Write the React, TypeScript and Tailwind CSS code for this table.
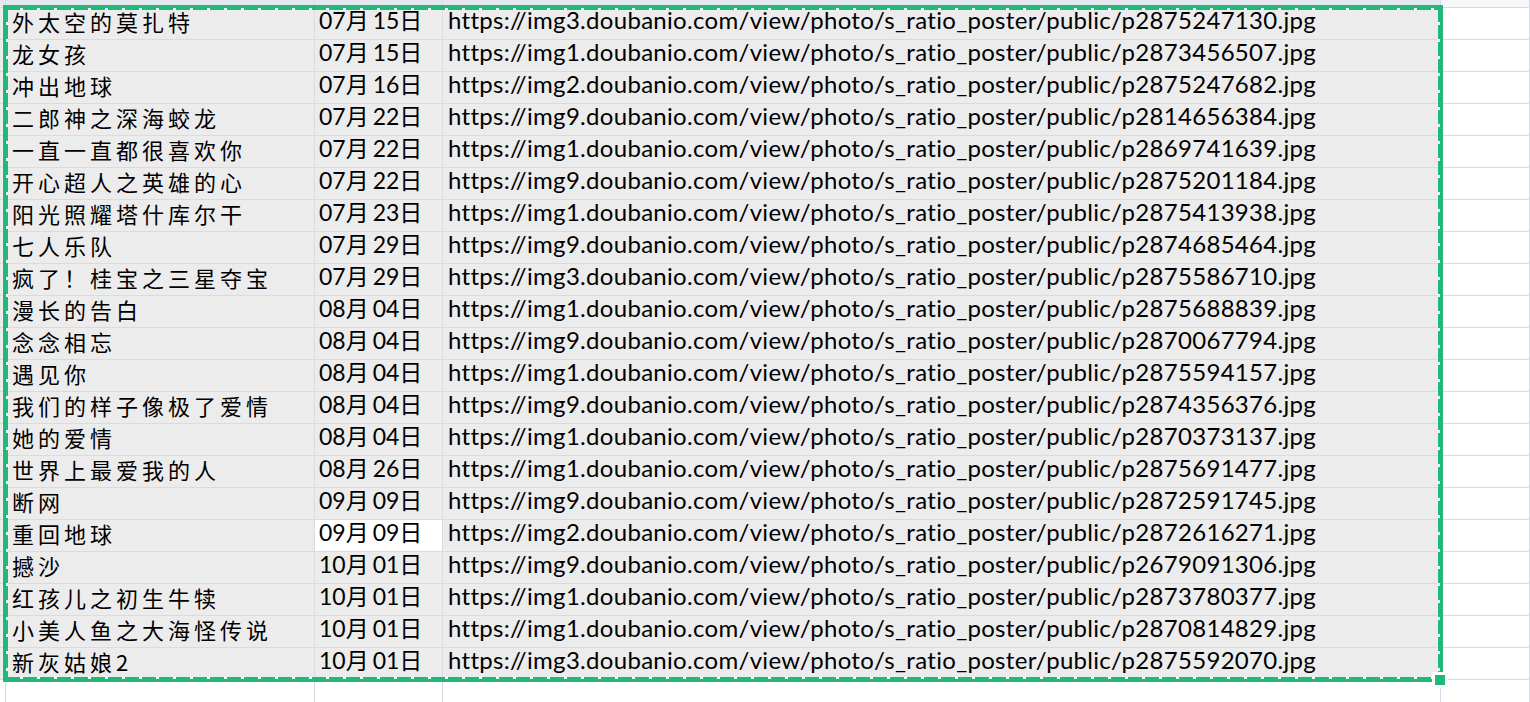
import React from 'react';

type Row = { title: string; date: string; host: string; id: string };

const rows: Row[] = [
  { title: '外太空的莫扎特', date: '07月15日', host: 'img3', id: 'p2875247130' },
  { title: '龙女孩', date: '07月15日', host: 'img1', id: 'p2873456507' },
  { title: '冲出地球', date: '07月16日', host: 'img2', id: 'p2875247682' },
  { title: '二郎神之深海蛟龙', date: '07月22日', host: 'img9', id: 'p2814656384' },
  { title: '一直一直都很喜欢你', date: '07月22日', host: 'img1', id: 'p2869741639' },
  { title: '开心超人之英雄的心', date: '07月22日', host: 'img9', id: 'p2875201184' },
  { title: '阳光照耀塔什库尔干', date: '07月23日', host: 'img1', id: 'p2875413938' },
  { title: '七人乐队', date: '07月29日', host: 'img9', id: 'p2874685464' },
  { title: '疯了！桂宝之三星夺宝', date: '07月29日', host: 'img3', id: 'p2875586710' },
  { title: '漫长的告白', date: '08月04日', host: 'img1', id: 'p2875688839' },
  { title: '念念相忘', date: '08月04日', host: 'img9', id: 'p2870067794' },
  { title: '遇见你', date: '08月04日', host: 'img1', id: 'p2875594157' },
  { title: '我们的样子像极了爱情', date: '08月04日', host: 'img9', id: 'p2874356376' },
  { title: '她的爱情', date: '08月04日', host: 'img1', id: 'p2870373137' },
  { title: '世界上最爱我的人', date: '08月26日', host: 'img1', id: 'p2875691477' },
  { title: '断网', date: '09月09日', host: 'img9', id: 'p2872591745' },
  { title: '重回地球', date: '09月09日', host: 'img2', id: 'p2872616271' },
  { title: '撼沙', date: '10月01日', host: 'img9', id: 'p2679091306' },
  { title: '红孩儿之初生牛犊', date: '10月01日', host: 'img1', id: 'p2873780377' },
  { title: '小美人鱼之大海怪传说', date: '10月01日', host: 'img1', id: 'p2870814829' },
  { title: '新灰姑娘2', date: '10月01日', host: 'img3', id: 'p2875592070' },
];

const cell = 'border-r border-b border-[#d5dbe7] whitespace-nowrap';
const font = "font-['Lato','Noto_Sans_CJK_SC',sans-serif]";

// "07月15日" -> month/day digits with the small gap Excel leaves after 月
function DateText({ value }: { value: string }) {
  const [m, rest] = value.split('月');
  return (
    <span>
      {m}月<span className="ml-[4px]">{rest}</span>
    </span>
  );
}

export default function App() {
  return (
    <div className={`relative w-[1530px] h-[702px] overflow-hidden bg-white text-black ${font}`}>
      <div className="grid grid-cols-[6px_309px_128px_998px_1fr]">
        {/* partial row above */}
        <div className={`${cell} h-[8px] bg-[#e4e7ed]`} />
        <div className={`${cell} h-[8px] bg-[#e4e7ed]`} />
        <div className={`${cell} h-[8px] bg-[#e4e7ed]`} />
        <div className={`${cell} h-[8px] bg-[#e4e7ed]`} />
        <div className={`${cell} h-[8px] bg-[#f6f7f9]`} />

        {rows.map((r, i) => (
          <React.Fragment key={r.id}>
            <div className={`${cell} h-[32px] bg-[#ececec]`} />
            <div className={`${cell} h-[32px] bg-[#ececec] flex items-center pl-[6px] pb-[6px] text-[22px] leading-[28px] tracking-[4px] font-['Noto_Sans_CJK_SC',sans-serif]`}>
              {r.title}
            </div>
            <div className={`${cell} h-[32px] flex items-center pl-[4px] pb-[7px] text-[23px] leading-[28px] ${i === 16 ? 'bg-white' : 'bg-[#ececec]'}`}>
              <DateText value={r.date} />
            </div>
            <div className={`${cell} h-[32px] bg-[#ececec] flex items-center pl-[5px] pb-[7px] text-[24px] leading-[28px] tracking-[0.3px]`}>
              {`https://${r.host}.doubanio.com/view/photo/s_ratio_poster/public/${r.id}.jpg`}
            </div>
            <div className={`${cell} h-[32px] bg-white`} />
          </React.Fragment>
        ))}

        {/* empty row below */}
        <div className={`${cell} h-[40px] bg-white`} />
        <div className={`${cell} h-[40px] bg-white`} />
        <div className={`${cell} h-[40px] bg-white`} />
        <div className={`${cell} h-[40px] bg-white`} />
        <div className={`${cell} h-[40px] bg-white`} />
      </div>

      {/* copy marquee around selection */}
      <div className="absolute left-[3px] top-[5px] w-[1440px] h-[677px] border-[3px] border-[#21b97a] pointer-events-none">
        <div className="absolute inset-x-0 top-0 h-[2px] bg-[repeating-linear-gradient(90deg,#21b97a_0_14px,#ffffff_14px_17px)]" />
        <div className="absolute inset-x-0 bottom-0 h-[2px] bg-[repeating-linear-gradient(90deg,#21b97a_0_14px,#ffffff_14px_17px)]" />
        <div className="absolute inset-y-0 left-0 w-[2px] bg-[repeating-linear-gradient(180deg,#21b97a_0_14px,#ffffff_14px_17px)]" />
        <div className="absolute inset-y-0 right-0 w-[2px] bg-[repeating-linear-gradient(180deg,#21b97a_0_14px,#ffffff_14px_17px)]" />
      </div>
      {/* fill handle */}
      <div className="absolute left-[1432px] top-[672px] w-[16px] h-[16px] border-[3px] border-white bg-[#21b97a]" />
    </div>
  );
}
